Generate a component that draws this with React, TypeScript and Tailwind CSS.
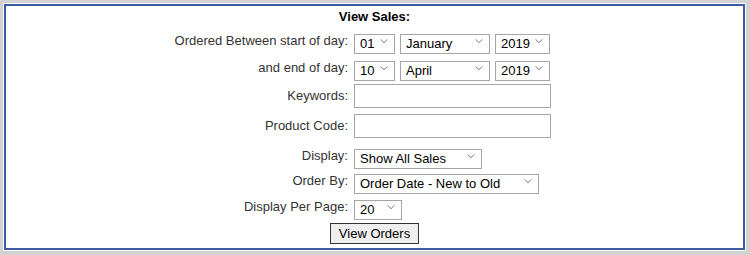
const Chevron = () => (
  <svg
    className="pointer-events-none absolute right-[7px] top-1/2 -translate-y-1/2"
    width="8"
    height="5"
    viewBox="0 0 8 5"
    fill="none"
  >
    <path d="M0.5 0.8L4 4.2L7.5 0.8" stroke="#7a7a7a" strokeWidth="1" />
  </svg>
);

const Select = ({ value, width }: { value: string; width: string }) => (
  <div className={`relative h-[20px] ${width}`}>
    <select
      defaultValue={value}
      className="h-full w-full appearance-none border border-[#a6a6a6] bg-white pl-[5px] text-[13px] leading-[18px] text-black outline-none"
    >
      <option>{value}</option>
    </select>
    <Chevron />
  </div>
);

const Row = ({
  label,
  className,
  children,
}: {
  label: string;
  className: string;
  children: React.ReactNode;
}) => (
  <div className={`flex items-center ${className}`}>
    <div className="w-[342px] text-right text-[13px] leading-[16px] text-[#333]">
      {label}
    </div>
    <div className="ml-[6px] flex items-center gap-[5px]">{children}</div>
  </div>
);

const App = () => {
  return (
    <div className="h-[255px] w-[750px] bg-[#d2d2d2] pl-[3px] pt-[3px] pr-[4px] pb-[4px] font-['Liberation_Sans',Arial,sans-serif]">
      <div className="h-full w-full bg-white p-[1px]">
        <div className="flex h-full w-full flex-col border-2 border-[#3e5aa2]">
          {/* Title */}
          <div className="mt-[3px] text-center text-[13px] font-bold leading-[16px] text-black">
            View Sales:
          </div>

          <Row label="Ordered Between start of day:" className="mt-[6px]">
            <Select value="01" width="w-[41px]" />
            <Select value="January" width="w-[90px]" />
            <Select value="2019" width="w-[55px]" />
          </Row>

          <Row label="and end of day:" className="mt-[7px]">
            <Select value="10" width="w-[41px]" />
            <Select value="April" width="w-[90px]" />
            <Select value="2019" width="w-[55px]" />
          </Row>

          <Row label="Keywords:" className="mt-[6px]">
            <input
              type="text"
              className="h-[24px] w-[197px] border border-[#a6a6a6] bg-white px-[3px] text-[13px] outline-none"
            />
          </Row>

          <Row label="Product Code:" className="mt-[6px]">
            <input
              type="text"
              className="h-[24px] w-[197px] border border-[#a6a6a6] bg-white px-[3px] text-[13px] outline-none"
            />
          </Row>

          <Row label="Display:" className="mt-[8px]">
            <Select value="Show All Sales" width="w-[128px]" />
          </Row>

          <Row label="Order By:" className="mt-[5px]">
            <Select value="Order Date - New to Old" width="w-[185px]" />
          </Row>

          <Row label="Display Per Page:" className="mt-[6px]">
            <Select value="20" width="w-[48px]" />
          </Row>

          <div className="mt-[6px] flex justify-center">
            <button className="h-[21px] w-[89px] border border-[#333] bg-[#efefef] text-[13px] leading-[18px] text-black">
              View Orders
            </button>
          </div>
        </div>
      </div>
    </div>
  );
};

export default App;
